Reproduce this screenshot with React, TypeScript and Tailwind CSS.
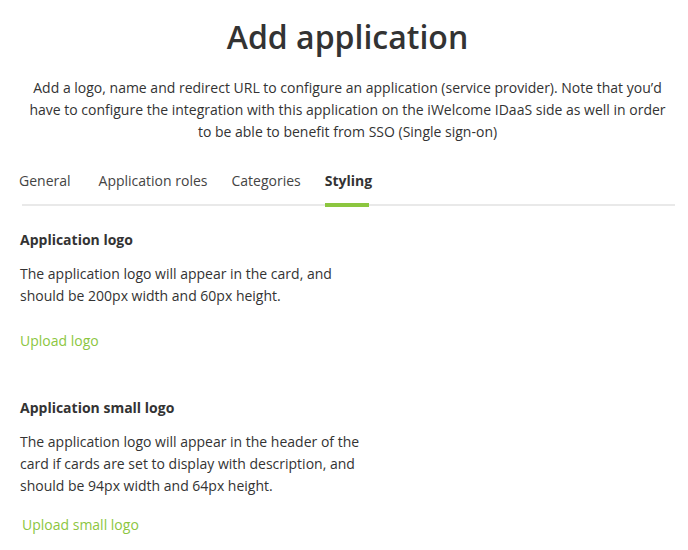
import React from "react";

export default function App() {
  const font = { fontFamily: '"Open Sans", "Noto Sans", sans-serif' };
  return (
    <div className="w-[688px] h-[550px] bg-white text-[#333333] overflow-hidden pl-[20px] pr-[13px]" style={font}>
      <h1 className="pt-[15px] text-center text-[32px] leading-[44px] font-semibold text-[#333333]">
        Add application
      </h1>
      <p className="mt-[18px] mx-[8px] text-center text-[14px] leading-[22px] text-[#333333]">
        Add a logo, name and redirect URL to configure an application (service provider). Note that you’d have to configure the integration with this application on the iWelcome IDaaS side as well in order to be able to benefit from SSO (Single sign-on)
      </p>
      <nav className="mt-[27px] ml-[2px] flex border-b-2 border-[#e9e9e9] text-[14px] leading-[22px]">
        <span className="-ml-[3px] pb-[12px] text-[#444444]">General</span>
        <span className="ml-[28px] pb-[12px] text-[#444444]">Application roles</span>
        <span className="ml-[24px] pb-[12px] text-[#444444]">Categories</span>
        <span className="relative ml-[24px] pb-[12px] font-bold text-[#333333]">
          Styling
          <span className="absolute left-0 -bottom-[3px] h-[4px] w-[44px] bg-[#8cc63f]" />
        </span>
      </nav>
      <section className="mt-[23px] text-[14px] leading-[22px]">
        <h2 className="font-bold">Application logo</h2>
        <p className="mt-[12px] w-[350px]">
          The application logo will appear in the card, and should be 200px width and 60px height.
        </p>
        <a className="mt-[23px] block text-[#8cc63f]">Upload logo</a>
      </section>
      <section className="mt-[45px] text-[14px] leading-[22px]">
        <h2 className="font-bold">Application small logo</h2>
        <p className="mt-[12px] w-[350px]">
          The application logo will appear in the header of the card if cards are set to display with description, and should be 94px width and 64px height.
        </p>
        <a className="mt-[17px] ml-[2px] block text-[#8cc63f]">Upload small logo</a>
      </section>
    </div>
  );
}
